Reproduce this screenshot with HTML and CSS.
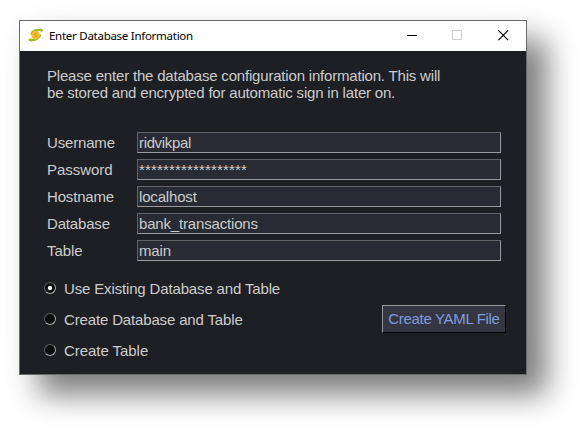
FILE: index.html
```html
<!DOCTYPE html>
<html lang="en">
<head>
<meta charset="utf-8">
<title>Enter Database Information</title>
<link rel="stylesheet" href="styles.css">
</head>
<body>
<div class="window">
  <header class="titlebar">
    <svg class="logo" width="16" height="14" viewBox="0 0 16 14">
      <path d="M1 11.8C5 12.8 9 12 11.6 8.6L12.6 6.5" fill="none" stroke="#9cbd1c" stroke-width="1.8"/>
      <path d="M3 6.8C4 3.2 7 1.4 13 2.2" fill="none" stroke="#9cbd1c" stroke-width="1.8"/>
      <path d="M12.4 0L15.6 2.2L12.6 4.4ZM3.4 9.8L0 11.8L3.8 14Z" fill="#9cbd1c"/>
      <circle cx="7.6" cy="7" r="4.3" fill="#f5bd2b"/>
      <path d="M9.2 5.2H7Q6 5.2 6 6.1T7 7H8.3Q9.3 7 9.3 7.9T8.3 8.8H6" fill="none" stroke="#e29a1c" stroke-width=".8"/>
    </svg>
    <h1 class="title">Enter Database Information</h1>
    <div class="controls">
      <svg width="11" height="11" viewBox="0 0 11 11"><path d="M1 5.5H11" stroke="#000"/></svg>
      <svg width="11" height="11" viewBox="0 0 11 11"><path d="M.5 .5H9.5V9.5H.5Z" fill="none" stroke="#ccc"/></svg>
      <svg width="11" height="11" viewBox="0 0 11 11"><path d="M.4 .4L10.1 10.1M10.1 .4L.4 10.1" stroke="#000" stroke-width="1.15"/></svg>
    </div>
  </header>
  <main class="content">
    <p class="intro">Please enter the database configuration information. This will<br>be stored and encrypted for automatic sign in later on.</p>
    <div class="fields">
      <span>Username</span><div class="input tight">ridvikpal</div>
      <span class="loose">Password</span><div class="input stars">******************</div>
      <span>Hostname</span><div class="input">localhost</div>
      <span>Database</span><div class="input">bank_transactions</div>
      <span class="loose">Table</span><div class="input">main</div>
    </div>
    <div class="bottom">
      <div class="options">
        <div class="option"><i class="radio on"></i>Use Existing Database and Table</div>
        <div class="option"><i class="radio"></i>Create Database and Table</div>
        <div class="option loose"><i class="radio"></i>Create Table</div>
      </div>
      <div class="button">Create YAML File</div>
    </div>
  </main>
</div>
</body>
</html>
```
FILE: styles.css
```css
* { box-sizing: border-box; }
body {
  margin: 0;
  padding: 20px 0 0 19px;
  height: 432px;
  overflow: hidden;
  background: #fff;
  font: 15px/17px "Liberation Sans", Arial, sans-serif;
  color: #ccc;
}
.window {
  width: 508px;
  height: 355px;
  border: 1px solid #6b6b6d;
  background: #1e1f24;
  box-shadow: 20px 20px 28px rgba(0, 0, 0, .49), 6px 6px 40px rgba(0, 0, 0, .04);
}
.titlebar {
  display: flex;
  align-items: center;
  height: 30px;
  padding: 0 17px 0 8px;
  background: #fff;
  color: #000;
}
.logo { margin-top: -2px; }
.title {
  margin: 0 0 0 5px;
  font: 11.5px/16px "Noto Sans", sans-serif;
  letter-spacing: -.27px;
  white-space: nowrap;
}
.controls { display: flex; gap: 35px; margin-left: auto; margin-top: -1px; }
.controls svg { display: block; }
.intro { margin: 16px 0 0 27px; letter-spacing: -.19px; white-space: nowrap; }
.fields {
  display: grid;
  grid-template-columns: 90px 364px;
  row-gap: 6px;
  margin: 31px 0 0 27px;
  line-height: 21px;
  letter-spacing: -.17px;
}
.input {
  height: 21px;
  padding-left: 1px;
  border: 1px solid;
  border-color: #626366 #999a9c #999a9c #626366;
  background: #282b33;
  line-height: 19px;
}
.tight { letter-spacing: -.35px; }
.loose { letter-spacing: -.05px; }
.stars { letter-spacing: .16px; }
.bottom { display: flex; justify-content: space-between; margin: 19px 20px 0 24px; }
.options { display: flex; flex-direction: column; gap: 14px; letter-spacing: -.15px; }
.option { display: flex; align-items: center; gap: 8px; white-space: nowrap; }
.radio {
  width: 12px;
  height: 12px;
  margin-bottom: 2px;
  border: 1px solid;
  border-color: #5c5c5f #aaa #aaa #5c5c5f;
  border-radius: 50%;
  background: #0b0c0e;
}
.on { background: radial-gradient(circle, #fff 0 1.8px, #0b0c0e 2.6px); }
.button {
  width: 124px;
  height: 28px;
  margin-top: 25px;
  border: 1px solid;
  border-color: #96989c #000 #000 #96989c;
  background: #343741;
  color: #8299e0;
  text-align: center;
  line-height: 26px;
  letter-spacing: -.32px;
  white-space: nowrap;
}
```
